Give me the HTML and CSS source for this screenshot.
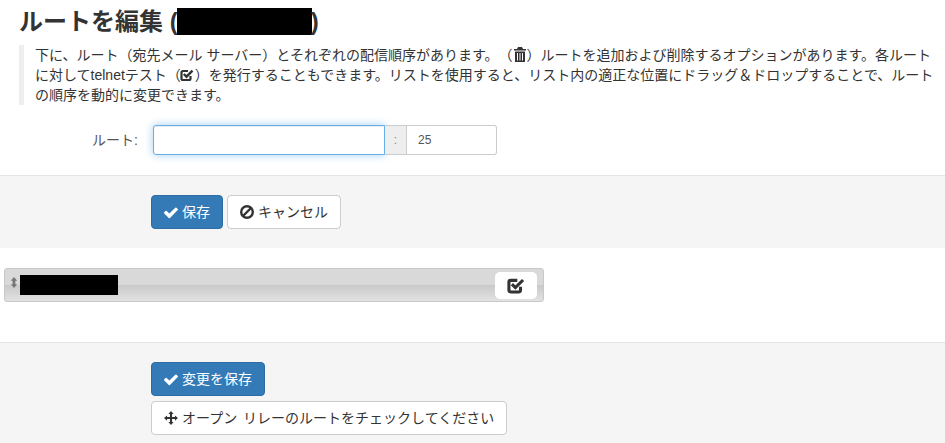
FILE: index.html
```html
<!DOCTYPE html>
<html lang="ja">
<head>
<meta charset="UTF-8">
<meta name="viewport" content="width=device-width, initial-scale=1.0">
<title>ルートを編集</title>
<link rel="stylesheet" href="styles.css">
</head>
<body>

<h1 class="title">ルートを編集 (<span class="redacted title-redacted"></span>)</h1>

<blockquote class="help">
  下に、ルート（宛先メール サーバー）とそれぞれの配信順序があります。（<svg class="icon trash-icon" viewBox="2 1 12 15"><path d="M6 1h4l1 2h3v1.500H2V3h3z"/><path d="M3 5.500h10V16H3zM5 7v7.500h1V7zm2.500 0v7.500h1V7zM10 7v7.500h1V7z" fill-rule="evenodd"/></svg>）ルートを追加および削除するオプションがあります。各ルートに対してtelnetテスト（<svg class="icon inline-icon" viewBox="1 2 14 13"><path d="M11.500 9.500V12a1.500 1.500 0 0 1-1.500 1.500H4A1.500 1.500 0 0 1 2.500 12V6A1.500 1.500 0 0 1 4 4.500h5" fill="none" stroke="currentColor" stroke-width="2.200"/><path d="M4.800 7.500l2.700 2.700 6-6" fill="none" stroke="currentColor" stroke-width="2.400"/></svg>）を発行することもできます。リストを使用すると、リスト内の適正な位置にドラッグ＆ドロップすることで、ルートの順序を動的に変更できます。
</blockquote>

<form class="route-form">
  <label class="route-label" for="host">ルート:</label>
  <input class="field host-field" id="host" type="text">
  <span class="addon">:</span>
  <input class="field port-field" type="text" value="25">
</form>

<div class="actions first-actions">
  <button class="btn btn-primary" type="button">
    <svg class="icon" viewBox="121 298 1550 1088"><path d="M1671 566q0 40-28 68l-724 724-136 136q-28 28-68 28t-68-28l-136-136-362-362q-28-28-28-68t28-68l136-136q28-28 68-28t68 28l294 295 656-657q28-28 68-28t68 28l136 136q28 28 28 68z"/></svg>保存
  </button>
  <button class="btn btn-default" type="button">
    <svg class="icon" viewBox="1 1 14 14"><circle cx="8" cy="8" r="5.800" fill="none" stroke="currentColor" stroke-width="2.400"/><path d="M4 12l8-8" stroke="currentColor" stroke-width="2.400"/></svg>キャンセル
  </button>
</div>

<div class="route-item">
  <svg class="handle" viewBox="0 0 8 12"><path d="M4 0l3.500 4H5.500v4h2L4 12 .5 8h2V4h-2z"/></svg>
  <span class="redacted route-redacted"></span>
  <button class="test-btn" type="button">
    <svg class="icon test-icon" viewBox="1 2 14 13"><path d="M11.500 9.500V12a1.500 1.500 0 0 1-1.500 1.500H4A1.500 1.500 0 0 1 2.500 12V6A1.500 1.500 0 0 1 4 4.500h5" fill="none" stroke="currentColor" stroke-width="2.400"/><path d="M4.800 7.500l2.700 2.700 6-6" fill="none" stroke="currentColor" stroke-width="2.400"/></svg>
  </button>
</div>

<div class="actions last-actions">
  <button class="btn btn-primary" type="button">
    <svg class="icon" viewBox="121 298 1550 1088"><path d="M1671 566q0 40-28 68l-724 724-136 136q-28 28-68 28t-68-28l-136-136-362-362q-28-28-28-68t28-68l136-136q28-28 68-28t68 28l294 295 656-657q28-28 68-28t68 28l136 136q28 28 28 68z"/></svg>変更を保存
  </button>
  <button class="btn btn-default btn-wide" type="button">
    <svg class="icon" viewBox="0 0 16 16"><path d="M8 0l3 3.500H9.200v3.300h3.300V5L16 8l-3.500 3V9.200H9.200v3.300H11L8 16l-3-3.500h1.800V9.200H3.500V11L0 8l3.500-3v1.800h3.300V3.500H5z"/></svg>オープン リレーのルートをチェックしてください
  </button>
</div>

</body>
</html>
```

FILE: styles.css
```css
/* Route editor */
body {
  font-family: "Liberation Sans", "Noto Sans CJK JP", sans-serif;
  font-size: 14px;
  line-height: 20px;
  color: #333;
  background-color: #fff;
  margin: 0;
  padding: 0;
  text-spacing-trim: space-all;
}
.title {
  font-size: 24px;
  line-height: 27px;
  font-weight: 700;
  margin: 8px 0 10px 19px;
}
.redacted {
  display: inline-block;
  background-color: #000;
}
.title-redacted {
  width: 135px;
  height: 27px;
  margin-left: -1px;
  margin-right: -1px;
  vertical-align: top;
}
.help {
  margin: 0 0 20px 19px;
  padding: 0 5px 0 11px;
  border-left: 5px solid #eee;
}
.icon {
  width: 14px;
  height: 14px;
  fill: currentColor;
  vertical-align: -2px;
}
.inline-icon {
  width: 14px;
  height: 14px;
  margin: 0 1px 0 -1px;
}
.trash-icon {
  width: 12px;
  height: 15px;
  margin: 0 1px;
}
.route-form {
  display: flex;
  align-items: center;
  height: 30px;
  margin-bottom: 20px;
}
.route-label {
  width: 138px;
  margin-right: 15px;
  text-align: right;
  color: #555;
}
.field {
  box-sizing: border-box;
  height: 30px;
  padding: 5px 10px;
  font-family: inherit;
  font-size: 12px;
  color: #555;
  border: 1px solid #ccc;
  background-color: #fff;
  outline: none;
}
.host-field {
  width: 232px;
  border-color: #66afe9;
  border-radius: 3px 0 0 3px;
  box-shadow: inset 0 1px 1px rgba(0, 0, 0, 0.075), 0 0 8px rgba(102, 175, 233, 0.6);
}
.addon {
  box-sizing: border-box;
  width: 22px;
  height: 30px;
  line-height: 28px;
  text-align: center;
  font-size: 12px;
  color: #888;
  background-color: #eee;
  border-right: 1px solid #ccc;
  border-top: 1px solid #ccc;
  border-bottom: 1px solid #ccc;
}
.port-field {
  width: 90px;
  padding-left: 11px;
  border-left: 0;
  border-radius: 0 3px 3px 0;
}
.actions {
  background-color: #f5f5f5;
  border-top: 1px solid #e5e5e5;
  padding: 19px 0 19px 151px;
}
.first-actions {
  display: flex;
  gap: 4px;
}
.last-actions {
  display: flex;
  flex-direction: column;
  align-items: flex-start;
  gap: 5px;
  padding-bottom: 8px;
}
.btn {
  box-sizing: border-box;
  height: 34px;
  padding: 0 12px;
  font-family: inherit;
  font-size: 14px;
  line-height: 20px;
  border: 1px solid transparent;
  border-radius: 4px;
  white-space: nowrap;
}
.btn .icon {
  margin-right: 4px;
}
.btn-wide {
  word-spacing: 2px;
}
.btn-primary {
  color: #fff;
  background-color: #337ab7;
  border-color: #2e6da4;
}
.btn-default {
  color: #333;
  background-color: #fff;
  border-color: #ccc;
}
.route-item {
  box-sizing: border-box;
  display: flex;
  align-items: center;
  width: 540px;
  height: 34px;
  margin: 20px 0 40px 4px;
  padding: 0 6px 0 5px;
  border: 1px solid #c8c8c8;
  border-radius: 3px;
  background: linear-gradient(to bottom, #d9d9d9 0%, #d9d9d9 50%, #c9c9c9 50%, #e2e2e2 100%);
}
.handle {
  width: 8px;
  height: 11px;
  margin-top: -5px;
  fill: #777;
}
.route-redacted {
  width: 98px;
  height: 20px;
  margin-left: 2px;
}
.test-btn {
  width: 42px;
  height: 27px;
  margin-left: auto;
  padding: 0;
  color: #333;
  background-color: #fff;
  border: 0;
  border-radius: 5px;
}
.test-icon {
  width: 18px;
  height: 17px;
  vertical-align: middle;
}
```
